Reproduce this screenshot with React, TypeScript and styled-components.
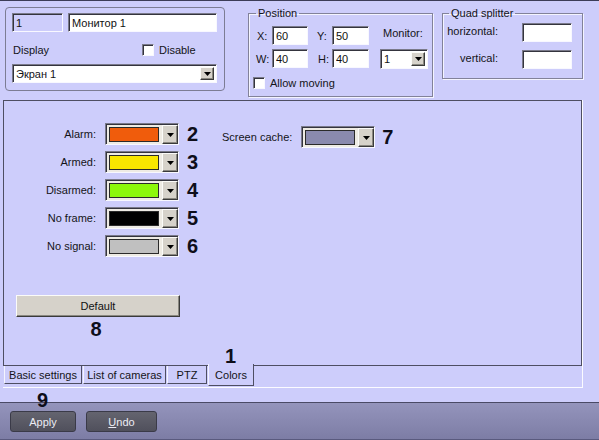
import React from "react";
import styled, {createGlobalStyle} from "styled-components";

const BG = "#cdcdfb";
const FACE = "#d6d2ca";
const EDGE = "#4e4e62";
const FONT = `"Liberation Sans", Arial, sans-serif`;

const GlobalStyle = createGlobalStyle`
	html, body {
		margin: 0;
		padding: 0;
		background: ${BG};
	}
	body {
		font-family: ${FONT};
		font-size: 11px;
		color: #141418;
	}
	* {
		box-sizing: border-box;
	}
`

const Root = styled.div`
	position: relative;
	width: 599px;
	height: 440px;
	overflow: hidden;
	display: flex;
	flex-direction: column;
	border-top: 1px solid #3c3c58;
`

const Header = styled.div`
	height: 99px;
	display: flex;
	align-items: flex-start;
	flex-shrink: 0;
`

/* ---------- common win32-ish controls ---------- */

const sunken = `
	border: 1px solid;
	border-color: #7a7a8a #f8f8ff #f8f8ff #7a7a8a;
	box-shadow: inset 1px 1px 0 #34343e;
`

const TextBox = styled.input<{ $w: number; $bg?: string }>`
	${sunken};
	width: ${p => p.$w}px;
	height: 19px;
	padding: 0 3px;
	margin: 0;
	background: ${p => p.$bg ?? "#ffffff"};
	font-family: ${FONT};
	font-size: 11px;
	color: #111;
	outline: none;
`

const CheckBox = styled.span`
	${sunken};
	display: inline-block;
	width: 12px;
	height: 12px;
	background: #fff;
	flex-shrink: 0;
`

const CheckLabel = styled.label<{ $gap: number }>`
	display: flex;
	align-items: center;
	gap: ${p => p.$gap}px;
`

const DropButton = styled.span<{ $w: number }>`
	display: flex;
	align-items: center;
	justify-content: center;
	width: ${p => p.$w}px;
	background: ${FACE};
	border: 1px solid;
	border-color: #fbfbf8 #3a3a3a #3a3a3a #fbfbf8;
	box-shadow: inset -1px -1px 0 #8a8880;
	flex-shrink: 0;
`

const Arrow = () => (
	<svg width="7" height="4" viewBox="0 0 7 4">
		<polygon points="0,0 7,0 3.5,4" fill="#000"/>
	</svg>
)

const SelectBox = styled.div<{ $w: number; $h: number }>`
	${sunken};
	display: flex;
	align-items: stretch;
	width: ${p => p.$w}px;
	height: ${p => p.$h}px;
	background: #fff;
	padding: 2px 2px 2px 3px;

	span:first-child {
		flex: 1;
		display: flex;
		align-items: center;
	}
`

const Select: React.FC<{ w: number; h: number; value: string; btn: number }> = ({w, h, value, btn}) => (
	<SelectBox $w={w} $h={h}>
		<span>{value}</span>
		<DropButton $w={btn}><Arrow/></DropButton>
	</SelectBox>
)

/* ---------- top panels ---------- */

const MonitorBox = styled.div`
	margin: 6px 0 0 5px;
	width: 220px;
	height: 84px;
	border: 1px solid #7c7c94;
	border-radius: 4px;
	padding: 5px 0 0 6px;
	display: flex;
	flex-direction: column;
`

const BoxRow = styled.div`
	display: flex;
	gap: 5px;
`

const DisplayRow = styled.div`
	display: grid;
	grid-template-columns: 129px auto;
	align-items: center;
	height: 14px;
	margin-top: 11px;
	padding-left: 1px;
`

const SelectRow = styled.div`
	margin-top: 7px;
`

const Group = styled.fieldset<{ $ml: number; $w: number; $h: number; $pl: number }>`
	margin: 6px 0 0 ${p => p.$ml}px;
	width: ${p => p.$w}px;
	height: ${p => p.$h}px;
	padding: 6px 0 0 ${p => p.$pl}px;
	border: 1px solid #82829a;
	box-shadow: inset 1px 1px 0 #f4f4ff, 1px 1px 0 #f4f4ff;
	min-width: 0;
`

const Legend = styled.legend<{ $ml?: number }>`
	padding: 0 2px;
	margin-left: ${p => p.$ml ?? 0}px;
	line-height: 13px;
	font-size: 11px;
`

const PosRow = styled.div<{ $mt?: number }>`
	display: flex;
	align-items: center;
	height: 19px;
	margin-top: ${p => p.$mt ?? 0}px;
`

const FieldLabel = styled.span<{ $w: number; $pl?: number }>`
	width: ${p => p.$w}px;
	padding-left: ${p => p.$pl ?? 0}px;
	flex-shrink: 0;
`

const MonitorCaption = styled.span`
	align-self: flex-start;
	line-height: 14px;
	padding-left: 14px;
`

const SelectSlot = styled.div`
	margin-left: 11px;
`

const MovingRow = styled.div`
	margin: 9px 0 0 -3px;
	height: 12px;
	display: flex;
	align-items: center;
`

const QuadRow = styled.div<{ $mt: number }>`
	display: flex;
	align-items: center;
	margin-top: ${p => p.$mt}px;
`

const QuadLabel = styled.span`
	width: 51px;
	text-align: right;
	margin-right: 24px;
	margin-top: -3px;
`

/* ---------- tab control ---------- */

const TabControl = styled.div`
	margin-left: 3px;
	width: 580px;
	height: 288px;
	border-right: 1px solid #fbfbff;
	border-bottom: 1px solid #fbfbff;
	display: flex;
	flex-direction: column;
	flex-shrink: 0;
`

const TabPage = styled.div`
	height: 266px;
	border: 1px solid ${EDGE};
	padding-top: 22px;
	display: flex;
	flex-direction: column;
`

const ColorsArea = styled.div`
	display: flex;
	align-items: flex-start;
`

const ColorRows = styled.div`
	display: flex;
	flex-direction: column;
	gap: 6px;
`

const ColorRow = styled.div`
	display: flex;
	align-items: center;
	height: 22px;
`

const RowLabel = styled.span`
	width: 92px;
	text-align: right;
	margin-right: 9px;
`

const Combo = styled.div`
	${sunken};
	display: flex;
	width: 74px;
	height: 22px;
	background: #eeebe4;
	padding: 1px 0 0 1px;
`

const Swatch = styled.span<{ $color: string }>`
	flex: 1;
	margin: 2px 3px 2px 2px;
	border: 1px solid #2a2a2a;
	background: ${p => p.$color};
`

const Num = styled.span<{ $ml: number }>`
	width: 14px;
	margin-left: ${p => p.$ml}px;
	font-size: 20px;
	font-weight: bold;
	line-height: 22px;
	color: #0e0e1a;
`

const ScreenCache = styled.div`
	margin: 3px 0 0 21px;
	display: flex;
	align-items: center;
	gap: 9px;
`

const DefaultArea = styled.div`
	margin: 38px 0 0 12px;
	width: 164px;
	display: flex;
	flex-direction: column;
	align-items: center;
`

const FaceButton = styled.button`
	width: 164px;
	height: 22px;
	background: ${FACE};
	border: 1px solid;
	border-color: #fbfbf8 #3a3a3a #3a3a3a #fbfbf8;
	box-shadow: inset -1px -1px 0 #8a8880;
	font-family: ${FONT};
	font-size: 11px;
	color: #111;
	padding: 0;
`

const BelowNum = styled.span`
	margin-top: 4px;
	padding-right: 4px;
	font-size: 20px;
	font-weight: bold;
	line-height: 17px;
	color: #0e0e1a;
`

const TabStrip = styled.div`
	display: flex;
	padding-left: 1px;
	height: 21px;
`

const Tab = styled.div<{ $w: number; $active?: boolean }>`
	position: relative;
	width: ${p => p.$w}px;
	height: ${p => p.$active ? 22 : 18}px;
	margin-top: ${p => p.$active ? -2 : 0}px;
	margin-right: 1px;
	background: ${BG};
	border-left: 1px solid #f4f4ff;
	border-right: 1px solid ${EDGE};
	border-bottom: 1px solid ${EDGE};
	display: flex;
	align-items: center;
	justify-content: center;
	padding-top: ${p => p.$active ? 1 : 0}px;
	white-space: nowrap;
`

const Badge = styled.span<{ $left: number; $top: number }>`
	position: absolute;
	left: ${p => p.$left}px;
	top: ${p => p.$top}px;
	font-size: 20px;
	font-weight: bold;
	line-height: 15px;
	color: #0e0e1a;
`

/* ---------- bottom bar ---------- */

const Spacer = styled.div`
	flex: 1;
`

const BottomBar = styled.div`
	position: relative;
	height: 38px;
	flex-shrink: 0;
	border-top: 1px solid #4a4a66;
	border-bottom: 1px solid #5a5a7e;
	background: linear-gradient(#9494bc, #7d7da5);
	display: flex;
	align-items: flex-start;
	gap: 10px;
	padding: 8px 0 0 10px;
`

const DarkButton = styled.button<{ $w: number }>`
	width: ${p => p.$w}px;
	height: 21px;
	padding: 0;
	border: 1px solid #3a3a48;
	border-radius: 3px;
	background: linear-gradient(#64646f, #50505c);
	color: #ececf4;
	font-family: ${FONT};
	font-size: 11px;

	u {
		text-decoration: underline;
	}
`

const colorRows = [
	{label: "Alarm:", color: "#f05c0c", num: "2"},
	{label: "Armed:", color: "#f8e600", num: "3"},
	{label: "Disarmed:", color: "#8cf80a", num: "4"},
	{label: "No frame:", color: "#000000", num: "5"},
	{label: "No signal:", color: "#c0c0c0", num: "6"},
];

export default function App() {
	return <>
		<GlobalStyle/>
		<Root>
			<Header>
				<MonitorBox>
					<BoxRow>
						<TextBox $w={51} $bg={BG} defaultValue="1" readOnly/>
						<TextBox $w={149} defaultValue="Монитор 1" readOnly/>
					</BoxRow>
					<DisplayRow>
						<span>Display</span>
						<CheckLabel $gap={5}><CheckBox/>Disable</CheckLabel>
					</DisplayRow>
					<SelectRow>
						<Select w={205} h={19} btn={14} value="Экран 1"/>
					</SelectRow>
				</MonitorBox>

				<Group $ml={23} $w={185} $h={90} $pl={7}>
					<Legend>Position</Legend>
					<PosRow>
						<FieldLabel $w={16} $pl={1}>X:</FieldLabel>
						<TextBox $w={36} defaultValue="60" readOnly/>
						<FieldLabel $w={24} $pl={9}>Y:</FieldLabel>
						<TextBox $w={37} defaultValue="50" readOnly/>
						<MonitorCaption>Monitor:</MonitorCaption>
					</PosRow>
					<PosRow $mt={4}>
						<FieldLabel $w={16}>W:</FieldLabel>
						<TextBox $w={36} defaultValue="40" readOnly/>
						<FieldLabel $w={24} $pl={10}>H:</FieldLabel>
						<TextBox $w={37} defaultValue="40" readOnly/>
						<SelectSlot>
							<Select w={48} h={20} btn={14} value="1"/>
						</SelectSlot>
					</PosRow>
					<MovingRow>
						<CheckLabel $gap={5}><CheckBox/>Allow moving</CheckLabel>
					</MovingRow>
				</Group>

				<Group $ml={9} $w={141} $h={72} $pl={4}>
					<Legend $ml={2}>Quad splitter</Legend>
					<QuadRow $mt={-3}>
						<QuadLabel>horizontal:</QuadLabel>
						<TextBox $w={50} readOnly/>
					</QuadRow>
					<QuadRow $mt={8}>
						<QuadLabel>vertical:</QuadLabel>
						<TextBox $w={50} readOnly/>
					</QuadRow>
				</Group>
			</Header>

			<TabControl>
				<TabPage>
					<ColorsArea>
						<ColorRows>
							{colorRows.map(r => (
								<ColorRow key={r.label}>
									<RowLabel>{r.label}</RowLabel>
									<Combo>
										<Swatch $color={r.color}/>
										<DropButton $w={16}><Arrow/></DropButton>
									</Combo>
									<Num $ml={8}>{r.num}</Num>
								</ColorRow>
							))}
						</ColorRows>
						<ScreenCache>
							<span>Screen cache:</span>
							<Combo>
								<Swatch $color="#8a8aae"/>
								<DropButton $w={16}><Arrow/></DropButton>
							</Combo>
							<Num $ml={-2}>7</Num>
						</ScreenCache>
					</ColorsArea>
					<DefaultArea>
						<FaceButton>Default</FaceButton>
						<BelowNum>8</BelowNum>
					</DefaultArea>
				</TabPage>
				<TabStrip>
					<Tab $w={78}>Basic settings</Tab>
					<Tab $w={83}>List of cameras</Tab>
					<Tab $w={40}>PTZ</Tab>
					<Tab $w={46} $active>
						Colors
						<Badge $left={16} $top={-15}>1</Badge>
					</Tab>
				</TabStrip>
			</TabControl>

			<Spacer/>

			<BottomBar>
				<Badge $left={37} $top={-10}>9</Badge>
				<DarkButton $w={66}>Apply</DarkButton>
				<DarkButton $w={71}><u>U</u>ndo</DarkButton>
			</BottomBar>
		</Root>
	</>
}
